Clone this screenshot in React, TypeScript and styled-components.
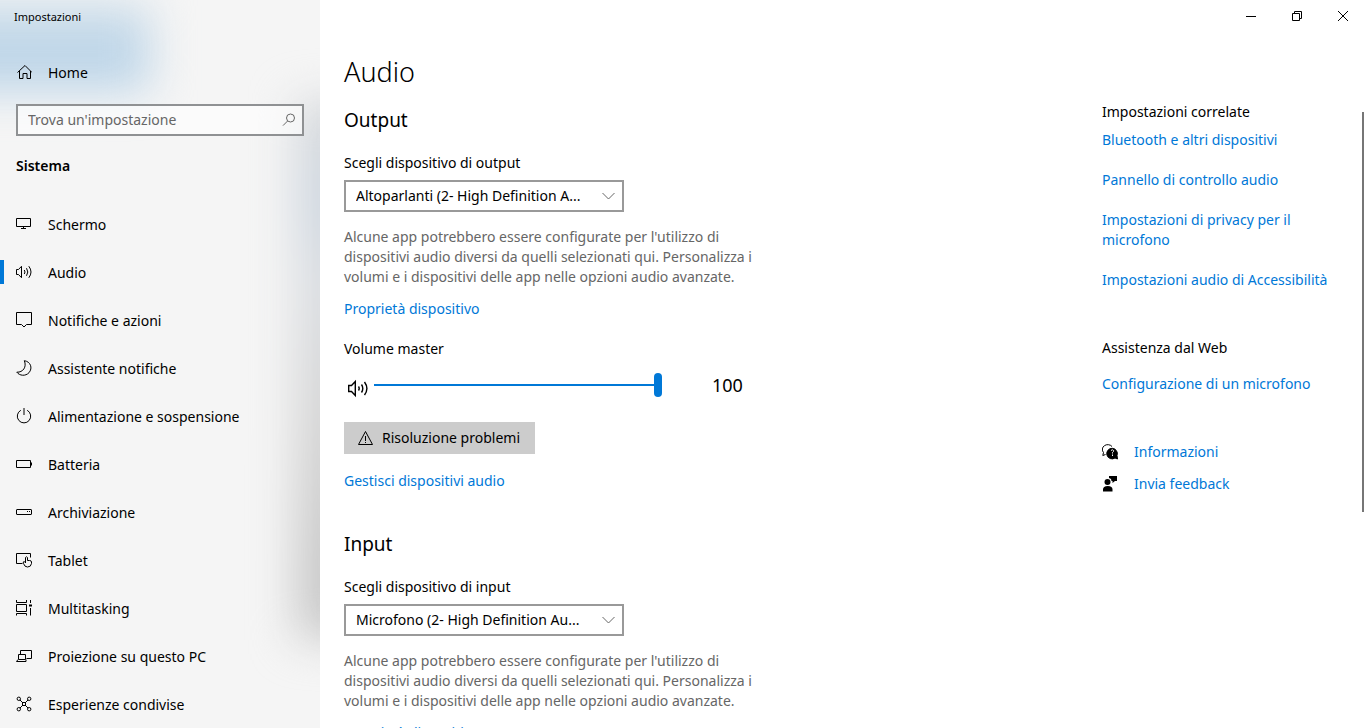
import React, { useState } from "react";
import styled, { createGlobalStyle } from "styled-components";

const GlobalStyle = createGlobalStyle`
  *, *::before, *::after { box-sizing: border-box; }
  body {
    margin: 0;
    background: #fff;
    color: #000;
    font-family: "Segoe UI", "Noto Sans", "Open Sans", sans-serif;
    font-size: 14px;
    line-height: 20px;
  }
  button, input, select { font: inherit; color: inherit; }
  svg { display: block; }
`;

const Window = styled.div`
  display: flex;
  height: 100vh;
  overflow: hidden;
`;

const Sidebar = styled.aside`
  position: relative;
  isolation: isolate;
  flex: 0 0 320px;
  overflow: hidden;
  background: #f5f5f5;

  &::before, &::after {
    content: "";
    position: absolute;
    z-index: -1;
  }
  /* desktop wallpaper showing through the acrylic panel */
  &::before {
    top: 6px;
    left: -60px;
    width: 210px;
    height: 84px;
    background: linear-gradient(#c8dbe9, #b9d3e8);
    filter: blur(22px);
  }
  &::after {
    top: 100px;
    right: -60px;
    width: 84px;
    height: 540px;
    background: linear-gradient(#d8dadc, #cfd7e0 18%, #dadde1 34%, #d4d4d4 60%, #c8c8c8 88%, #cccccc);
    filter: blur(22px);
  }
`;

const AppName = styled.div`
  height: 48px;
  padding: 7px 14px;
  font-size: 11px;
`;

const NavLink = styled.a<{ $active?: boolean }>`
  display: flex;
  align-items: center;
  gap: 16px;
  height: 48px;
  padding: 0 16px;
  background: ${(p) =>
    p.$active ? "linear-gradient(#0078d7, #0078d7) left center / 4px 24px no-repeat" : "none"};
  color: #000;
  text-decoration: none;
  svg { flex: none; }
`;

const NavLabel = styled.span`
  padding-top: 2px;
`;

const SearchBox = styled.label`
  display: flex;
  align-items: center;
  height: 32px;
  margin: 8px 16px 0;
  padding: 0 6px 0 10px;
  border: 2px solid #8f9193;
  background: rgba(255, 255, 255, 0.6);
  color: #666;
`;

const SearchInput = styled.input`
  flex: 1;
  min-width: 0;
  padding: 0;
  border: 0;
  outline: 0;
  background: transparent;
  &::placeholder { color: #666; opacity: 1; }
`;

const SidebarHeading = styled.h2`
  margin: 20px 16px 24px;
  font-size: 14px;
  font-weight: 600;
  line-height: 20px;
`;

const Main = styled.main`
  flex: 1;
  min-width: 0;
  position: relative;
`;

const WindowControls = styled.div`
  display: flex;
  justify-content: flex-end;
  height: 32px;
`;

const WindowButton = styled.button`
  display: grid;
  place-items: center;
  width: 46px;
  padding: 0;
  border: 0;
  background: transparent;
`;

const Columns = styled.div`
  display: flex;
  justify-content: space-between;
  padding-left: 24px;
`;

const Content = styled.div`
  flex: 0 1 420px;
`;

const PageTitle = styled.h1`
  margin: 20px 0 14px;
  font-size: 27px;
  font-weight: 300;
  line-height: 40px;
`;

const Section = styled.section`
  display: flex;
  flex-direction: column;
  align-items: flex-start;
  margin-bottom: 39px;
`;

const SectionTitle = styled.h2`
  margin: 0 0 19px;
  font-size: 19px;
  font-weight: 400;
  line-height: 28px;
`;

const SelectWrap = styled.div`
  display: grid;
  align-items: center;
  width: 280px;
  margin: 7px 0 15px;
  > * { grid-area: 1 / 1; }
  svg { justify-self: end; margin-right: 9px; pointer-events: none; }
`;

const Select = styled.select`
  appearance: none;
  width: 100%;
  height: 32px;
  padding: 0 30px 0 10px;
  border: 2px solid #999;
  border-radius: 0;
  background: #fff;
`;

const Hint = styled.p`
  margin: 0 0 12px;
  color: #666;
`;

const Link = styled.a`
  color: #0078d7;
  text-decoration: none;
`;

const VolumeLabel = styled.label`
  margin: 20px 0 10px;
`;

const VolumeRow = styled.div`
  display: flex;
  align-items: center;
  height: 32px;
  margin-bottom: 21px;
  padding-left: 3px;
  svg { margin: 5px 5px 0 0; }
`;

const Slider = styled.input`
  appearance: none;
  width: 288px;
  height: 24px;
  margin: 0 50px 0 0;
  background: linear-gradient(#0078d7, #0078d7) center / 100% 2px no-repeat;
  &::-webkit-slider-thumb {
    appearance: none;
    width: 8px;
    height: 24px;
    border-radius: 4px;
    background: #0078d7;
  }
`;

const VolumeValue = styled.output`
  font-size: 18px;
  line-height: 24px;
`;

const ActionButton = styled.button`
  display: flex;
  align-items: center;
  gap: 8px;
  height: 32px;
  margin-bottom: 17px;
  padding: 0 15px 0 14px;
  border: 0;
  background: #ccc;
`;

const Related = styled.aside`
  flex: 0 0 264px;
  padding: 70px 32px 0 0;
`;

const RelatedTitle = styled.h3`
  margin: 0;
  font-size: 14px;
  font-weight: 400;
  line-height: 20px;
`;

const LinkList = styled.div<{ $top: number; $bottom: number }>`
  display: flex;
  flex-direction: column;
  gap: 20px;
  padding: ${(p) => p.$top}px 0 ${(p) => p.$bottom}px;
`;

const IconLink = styled(Link)`
  display: flex;
  align-items: center;
  gap: 16px;
  height: 32px;
  svg { color: #000; }
`;

const ScrollThumb = styled.div`
  position: absolute;
  top: 112px;
  right: 2px;
  width: 2px;
  height: 55%;
  background: #767676;
`;

const Icon = ({ children, size = 16, box = 16 }: { children: React.ReactNode; size?: number; box?: number }) => (
  <svg width={size} height={size} viewBox={`0 0 ${box} ${box}`} fill="none" stroke="currentColor" aria-hidden="true">
    {children}
  </svg>
);

const Speaker = () => (
  <Icon>
    <path d="M.5 5.500h2l3-3.200v11.400l-3-3.200h-2z" />
    <path d="M8.300 6q1.400 2 0 4M10.500 4.200q2.600 3.800 0 7.600M12.800 2.200q4.400 5.800 0 11.600" />
  </Icon>
);

const LargeSpeaker = () => (
  <Icon size={22} box={22}>
    <g strokeWidth="1.400">
      <path d="M1.700 8.500h2.800L8.300 4.500v14l-3.800-4H1.700z" />
      <path d="M11.500 9.500q1.400 2 0 4M14.500 7.500q2.600 4 0 8M17.500 5q4.800 6.500 0 13" />
    </g>
  </Icon>
);

const Chevron = () => (
  <svg width="13" height="8" viewBox="0 0 13 8" fill="none" stroke="#666" aria-hidden="true">
    <path d="M.5 1l6 6 6-6" />
  </svg>
);

const navItems = [
  { label: "Schermo", icon: <Icon><path d="M.5 2.500h14v8H.5zM7.500 10.500v2M5 12.500h5" /></Icon> },
  { label: "Audio", icon: <Speaker />, active: true },
  { label: "Notifiche e azioni", icon: <Icon><path d="M.5.500h15v12h-5L8 15l-2.500-2.500h-5z" /></Icon> },
  { label: "Assistente notifiche", icon: <Icon><path d="M8.300.700C14.500 1.500 17 8 13 12.700 9.500 16.500 3.500 15.800.800 12.200 7 12.500 11 7 8.300.700z" /></Icon> },
  { label: "Alimentazione e sospensione", icon: <Icon><path d="M8 0v7M4.800 2.300a6.700 6.700 0 1 0 6.400 0" /></Icon> },
  { label: "Batteria", icon: <Icon><path d="M.5 4.500h14v7H.5zM15.500 6.500v3" /></Icon> },
  { label: "Archiviazione", icon: <Icon><rect x=".5" y="5.500" width="15" height="5" rx=".5" /><path d="M11 7.500h1M13 7.500h1" /></Icon> },
  {
    label: "Tablet",
    icon: (
      <Icon>
        <path d="M6.500 11.500h-6v-10h14V5.500" />
        <path d="M9.500 11V5.500q1-1.500 2 0V8.500h2q2 0 2 1.500v1.500q-.500 3.500-4 3.500-3 0-4-3.500l-.300-1.500q.800-1 2.300.500" />
      </Icon>
    ),
  },
  {
    label: "Multitasking",
    icon: (
      <Icon>
        <path d="M.5 4.500h10v7H.5zM.5 0v2.500h10V0M.5 15.500v-2h10v2M14.500 0v3M14.500 8v7.500" />
        <path d="M13 5.500h3" strokeWidth="2" />
      </Icon>
    ),
  },
  { label: "Proiezione su questo PC", icon: <Icon><path d="M4.500 6.500v-4h11v8h-5M2.500 6.500h7v5h-7zM2 11.500L.500 13.500h9.500v-2" /></Icon> },
  {
    label: "Esperienze condivise",
    icon: (
      <Icon>
        <circle cx="2.800" cy="2.800" r="1.700" />
        <circle cx="13.200" cy="2.800" r="1.700" />
        <circle cx="2.800" cy="13.200" r="1.700" />
        <circle cx="13.200" cy="13.200" r="1.700" />
        <path d="M4 4l3 3M12 4L9 7M4 12l3-3M12 12L9 9M6.500 6.500h3v3h-3z" />
      </Icon>
    ),
  },
];

const relatedLinks = [
  "Bluetooth e altri dispositivi",
  "Pannello di controllo audio",
  "Impostazioni di privacy per il microfono",
  "Impostazioni audio di Accessibilità",
];

interface DeviceProps {
  id: string;
  title: string;
  label: string;
  device: string;
  children?: React.ReactNode;
}

function DeviceSection({ id, title, label, device, children }: DeviceProps) {
  return (
    <Section>
      <SectionTitle>{title}</SectionTitle>
      <label htmlFor={id}>{label}</label>
      <SelectWrap>
        <Select id={id}>
          <option>{device}</option>
        </Select>
        <Chevron />
      </SelectWrap>
      <Hint>
        Alcune app potrebbero essere configurate per l'utilizzo di dispositivi audio diversi da quelli
        selezionati qui. Personalizza i volumi e i dispositivi delle app nelle opzioni audio avanzate.
      </Hint>
      <Link href="#proprieta">Proprietà dispositivo</Link>
      {children}
    </Section>
  );
}

export default function App() {
  const [volume, setVolume] = useState(100);
  return (
    <>
      <GlobalStyle />
      <Window>
        <Sidebar>
          <AppName>Impostazioni</AppName>
          <NavLink href="#home">
            <Icon>
              <path d="M1.500 8.500L9 1.500l7 7M3.500 7v7.500h3.500v-5h4v5h3.500V7" />
            </Icon>
            <NavLabel>Home</NavLabel>
          </NavLink>
          <SearchBox>
            <SearchInput type="text" placeholder="Trova un'impostazione" aria-label="Trova un'impostazione" />
            <Icon size={14} box={14}>
              <circle cx="8.500" cy="5" r="4" />
              <path d="M5.600 8L1 12.600" />
            </Icon>
          </SearchBox>
          <SidebarHeading>Sistema</SidebarHeading>
          <nav>
            {navItems.map((item) => (
              <NavLink key={item.label} href="#" $active={item.active}>
                {item.icon}
                <NavLabel>{item.label}</NavLabel>
              </NavLink>
            ))}
          </nav>
        </Sidebar>
        <Main>
          <WindowControls>
            <WindowButton aria-label="Riduci a icona">
              <Icon size={10} box={10}><path d="M0 5.500h10" /></Icon>
            </WindowButton>
            <WindowButton aria-label="Ripristina">
              <Icon size={10} box={10}><path d="M.5 2.500h7v7h-7zM2.500 2.500v-2h7v7h-2" /></Icon>
            </WindowButton>
            <WindowButton aria-label="Chiudi">
              <Icon size={10} box={10}><path d="M0 0l10 10M10 0L0 10" /></Icon>
            </WindowButton>
          </WindowControls>
          <Columns>
            <Content>
              <PageTitle>Audio</PageTitle>
              <DeviceSection
                id="output-device"
                title="Output"
                label="Scegli dispositivo di output"
                device="Altoparlanti (2- High Definition A..."
              >
                <VolumeLabel htmlFor="volume">Volume master</VolumeLabel>
                <VolumeRow>
                  <LargeSpeaker />
                  <Slider
                    id="volume"
                    type="range"
                    min={0}
                    max={100}
                    value={volume}
                    onChange={(e) => setVolume(Number(e.target.value))}
                  />
                  <VolumeValue htmlFor="volume">{volume}</VolumeValue>
                </VolumeRow>
                <ActionButton>
                  <Icon>
                    <path d="M7.500 1.500L14.500 14.500H.500zM7.500 6v5M7.500 12v1" />
                  </Icon>
                  Risoluzione problemi
                </ActionButton>
                <Link href="#gestisci">Gestisci dispositivi audio</Link>
              </DeviceSection>
              <DeviceSection
                id="input-device"
                title="Input"
                label="Scegli dispositivo di input"
                device="Microfono (2- High Definition Au..."
              />
            </Content>
            <Related>
              <RelatedTitle>Impostazioni correlate</RelatedTitle>
              <LinkList $top={8} $bottom={48}>
                {relatedLinks.map((text) => (
                  <Link key={text} href="#">{text}</Link>
                ))}
              </LinkList>
              <RelatedTitle>Assistenza dal Web</RelatedTitle>
              <LinkList $top={16} $bottom={42}>
                <Link href="#">Configurazione di un microfono</Link>
              </LinkList>
              <IconLink href="#info">
                <Icon>
                  <path d="M3.500 10.500L.800 11.500 1.500 8.500A5 4.500 0 1 1 10 2.500" />
                  <path d="M15.500 15l-2.500-1A5.300 5.300 0 1 1 15 11.500z" fill="currentColor" />
                  <path d="M9 6.500q1.500-1.500 2.600 0 .3 1-1.100 2v1M10.500 10.500v1.500" stroke="#fff" />
                </Icon>
                Informazioni
              </IconLink>
              <IconLink href="#feedback">
                <Icon>
                  <g fill="currentColor" stroke="none">
                    <circle cx="5.500" cy="6" r="3" />
                    <path d="M1 15.500v-2q0-3.500 4.800-3.500t4.700 3.500v2zM7 0h8v5h-2l-2.500 2V5H9.500L9 3 7 2z" />
                  </g>
                </Icon>
                Invia feedback
              </IconLink>
            </Related>
          </Columns>
          <ScrollThumb />
        </Main>
      </Window>
    </>
  );
}
